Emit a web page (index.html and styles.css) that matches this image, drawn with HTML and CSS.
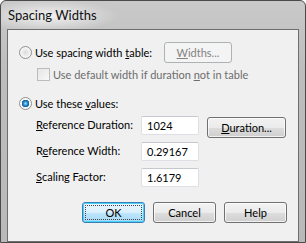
FILE: index.html
```html
<!DOCTYPE html>
<html lang="en">
  <head>
    <meta charset="UTF-8" />
    <title>Spacing Widths</title>
    <link rel="stylesheet" href="styles.css">
  </head>
  <body>
    <div class="window">
      <div class="titlebar">Spacing Widths</div>

      <div class="client">
        <div class="row-table">
          <label class="option">
            <span class="radio"></span>
            <span>Use spacing width <u>t</u>able:</span>
          </label>
          <button class="btn btn-disabled btn-widths"><u>W</u>idths...</button>
        </div>

        <label class="check-row">
          <span class="checkbox"></span>
          <span>Use default width if duration <u>n</u>ot in table</span>
        </label>

        <label class="option option-values">
          <span class="radio checked"></span>
          <span>Use these <u>v</u>alues:</span>
        </label>

        <div class="fields">
          <span class="field-label"><u>R</u>eference Duration:</span>
          <span class="textbox">1024</span>
          <button class="btn btn-duration"><u>D</u>uration...</button>

          <span class="field-label">R<u>e</u>ference Width:</span>
          <span class="textbox">0.29167</span>
          <span></span>

          <span class="field-label"><u>S</u>caling Factor:</span>
          <span class="textbox">1.6179</span>
          <span></span>
        </div>

        <div class="actions">
          <button class="btn btn-default"><span class="focus">OK</span></button>
          <button class="btn">Cancel</button>
          <button class="btn">Help</button>
        </div>
      </div>
    </div>
  </body>
</html>
```

FILE: styles.css
```css
body {
  margin: 0;
  background-color: #ffffff;
  font-family: Lato, "Open Sans", sans-serif;
  font-size: 11px;
  color: #000000;
  white-space: nowrap;
}

u {
  text-decoration: underline;
  text-underline-offset: 1px;
}

.window {
  width: 304px;
  height: 241px;
  border: 1px solid #4a4a4a;
  border-radius: 6px 6px 0 0;
  background: linear-gradient(to bottom, #c9c9c9 0%, #bdbdbd 30%, #b9b9b9 100%);
  display: flex;
  flex-direction: column;
}

.titlebar {
  height: 28px;
  padding-left: 7px;
  line-height: 29px;
  font-size: 13px;
  color: #101010;
  background: radial-gradient(ellipse 70px 16px at 48px 15px, rgba(255, 255, 255, 0.75), rgba(255, 255, 255, 0) 100%);
  border-radius: 6px 6px 0 0;
}

.client {
  margin: 0 6px;
  height: 205px;
  border: 1px solid #6e6e6e;
  background-color: #f0f0f0;
  padding: 12px 11px 0 11px;
  box-sizing: content-box;
}

/* radio / checkbox rows */

.row-table {
  display: flex;
  align-items: center;
  height: 21px;
}

.option {
  display: flex;
  align-items: center;
  gap: 3px;
  width: 145px;
}

.option-values {
  margin-top: 16px;
  height: 13px;
}

.radio {
  width: 13px;
  height: 13px;
  border-radius: 50%;
  box-sizing: border-box;
  border: 1px solid #8e8f8f;
  background: radial-gradient(circle at 50% 50%, #dcdcdc 0%, #f4f4f4 60%, #ffffff 100%);
  flex-shrink: 0;
}

.radio.checked {
  background: radial-gradient(circle at 50% 50%, #9fe0ff 0px, #2a8fd3 2px, #125b94 3.5px, #f6f6f6 4px, #ffffff 100%);
}

.check-row {
  display: flex;
  align-items: center;
  gap: 3px;
  margin: 5px 0 0 18px;
  height: 13px;
  color: #6d6d6d;
}

.checkbox {
  width: 13px;
  height: 13px;
  box-sizing: border-box;
  border: 1px solid #bcbcbc;
  background: linear-gradient(135deg, #e6e6e6, #f8f8f8);
  flex-shrink: 0;
}

/* reference values */

.fields {
  display: grid;
  grid-template-columns: 105px 58px 87px;
  grid-template-rows: 18px 18px 18px;
  row-gap: 8px;
  margin: 6px 0 0 17px;
}

.field-label {
  line-height: 18px;
}

.textbox {
  box-sizing: border-box;
  height: 19px;
  padding-left: 5px;
  line-height: 17px;
  background-color: #ffffff;
  border: 1px solid #dcdfe4;
  border-top-color: #c5c9cf;
  border-radius: 2px;
}

/* buttons */

.btn {
  box-sizing: border-box;
  height: 21px;
  padding: 0;
  font-family: inherit;
  font-size: 11px;
  color: #000000;
  border: 1px solid #707070;
  border-radius: 3px;
  background: linear-gradient(to bottom, #f2f2f2 0%, #ebebeb 50%, #dddddd 51%, #cfcfcf 100%);
  box-shadow: inset 0 0 0 1px rgba(255, 255, 255, 0.7);
}

.btn-widths {
  width: 68px;
  height: 21px;
}

.btn-disabled {
  color: #838383;
  border-color: #adb2b5;
  background: #f4f4f4;
  box-shadow: none;
}

.btn-duration {
  width: 79px;
  height: 21px;
  margin: 1px 0 0 8px;
}

.actions {
  display: flex;
  justify-content: flex-end;
  gap: 8px;
  margin-top: 16px;
}

.actions .btn {
  width: 63px;
}

.btn-default {
  border-color: #3c7fb1;
  background: linear-gradient(to bottom, #eaf6fd 0%, #d9f0fc 50%, #bee6fd 51%, #a7d9f5 100%);
  box-shadow: inset 0 0 0 1px #48d0ff;
}

.focus {
  display: block;
  margin: 2px;
  line-height: 15px;
  outline: 1px dotted #444444;
  outline-offset: -1px;
  border-radius: 1px;
}
```
